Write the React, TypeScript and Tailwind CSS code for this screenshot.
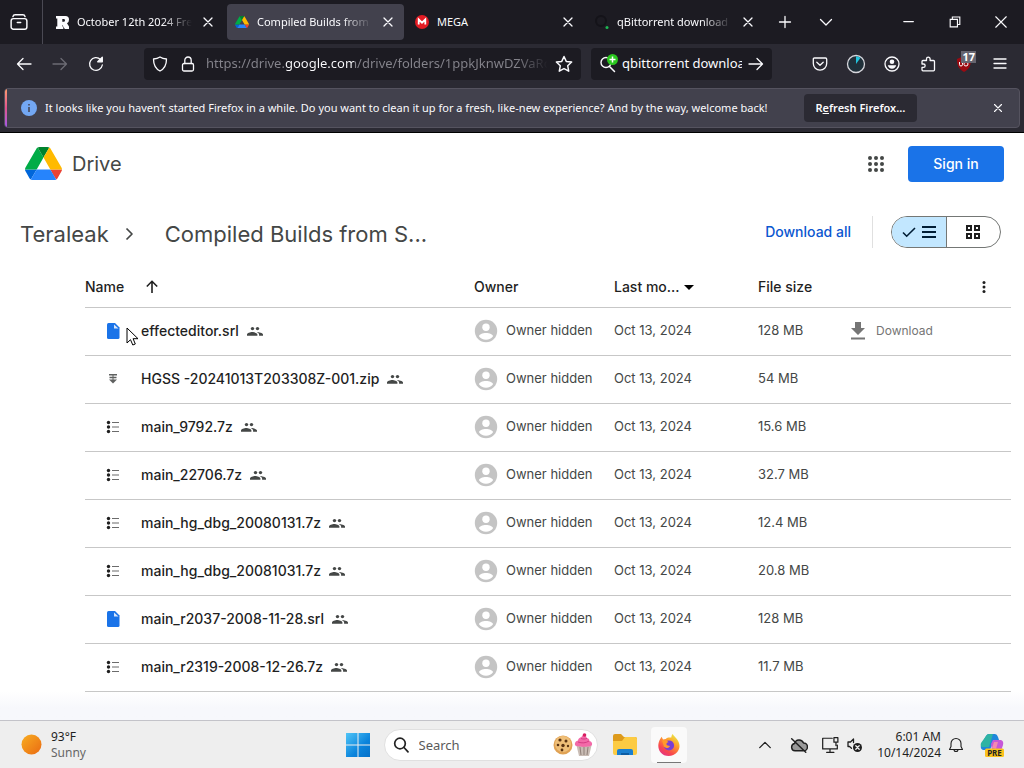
import type { ReactNode } from "react";
import clsx from "clsx";

type FileKind = "doc" | "zip" | "archive";
type DriveFile = { name: string; kind: FileKind; size: string };

const files: DriveFile[] = [
  { name: "effecteditor.srl", kind: "doc", size: "128 MB" },
  { name: "HGSS -20241013T203308Z-001.zip", kind: "zip", size: "54 MB" },
  { name: "main_9792.7z", kind: "archive", size: "15.6 MB" },
  { name: "main_22706.7z", kind: "archive", size: "32.7 MB" },
  { name: "main_hg_dbg_20080131.7z", kind: "archive", size: "12.4 MB" },
  { name: "main_hg_dbg_20081031.7z", kind: "archive", size: "20.8 MB" },
  { name: "main_r2037-2008-11-28.srl", kind: "doc", size: "128 MB" },
  { name: "main_r2319-2008-12-26.7z", kind: "archive", size: "11.7 MB" },
];

function Line({ size = 16, className, children }: { size?: number; className?: string; children: ReactNode }) {
  return (
    <svg width={size} height={size} viewBox="0 0 16 16" fill="none" stroke="currentColor" strokeWidth="1.3" strokeLinecap="round" strokeLinejoin="round" className={clsx("shrink-0", className)} aria-hidden="true">
      {children}
    </svg>
  );
}

function DriveLogo({ className }: { className?: string }) {
  return (
    <svg viewBox="0 0 87.3 78" className={className} aria-hidden="true">
      <path fill="#0066da" d="m6.6 66.85 3.85 6.65c.8 1.4 1.95 2.5 3.3 3.3l13.75-23.8h-27.5c0 1.55.4 3.1 1.2 4.5z" />
      <path fill="#00ac47" d="m43.65 25-13.75-23.8c-1.35.8-2.5 1.9-3.3 3.3l-25.4 44a9.06 9.06 0 0 0 -1.2 4.5h27.5z" />
      <path fill="#ea4335" d="m73.55 76.8c1.35-.8 2.5-1.9 3.3-3.3l1.6-2.75 7.65-13.25c.8-1.4 1.2-2.95 1.2-4.5h-27.502l5.852 11.5z" />
      <path fill="#00832d" d="m43.65 25 13.75-23.8c-1.35-.8-2.9-1.2-4.5-1.2h-18.5c-1.6 0-3.15.45-4.5 1.2z" />
      <path fill="#2684fc" d="m59.8 53h-32.3l-13.75 23.8c1.35.8 2.9 1.2 4.5 1.2h50.8c1.6 0 3.15-.45 4.5-1.2z" />
      <path fill="#ffba00" d="m73.4 26.5-12.7-22c-.8-1.4-1.95-2.5-3.3-3.3l-13.75 23.8 16.15 28h27.45c0-1.55-.4-3.1-1.2-4.5z" />
    </svg>
  );
}

const CloseIcon = ({ size = 16 }: { size?: number }) => (
  <Line size={size}><path d="M4 4l8 8M12 4l-8 8" /></Line>
);

function Tab({ title, icon, active, fade }: { title: string; icon: ReactNode; active?: boolean; fade?: boolean }) {
  return (
    <div className={clsx("flex h-9 min-w-0 max-w-[177px] flex-1 items-center gap-2 rounded px-2", active && "bg-[#42414d]")}>
      <span className="flex w-[14px] shrink-0 justify-center">{icon}</span>
      <button type="button" className={clsx("min-w-0 flex-1 overflow-hidden text-left whitespace-nowrap", fade && "[mask-image:linear-gradient(to_left,transparent,black_30px)]")}>
        {title}
      </button>
      <button type="button" aria-label="Close tab"><CloseIcon /></button>
    </div>
  );
}

function TabBar() {
  return (
    <div className="flex h-11 items-center bg-[#1c1b22]">
      <button type="button" aria-label="Recent browsing" className="flex w-[42px] justify-center pr-1">
        <Line size={18}>
          <rect x="1" y="5" width="14" height="9.4" rx="2" />
          <path d="M2.6 3.2c.3-1.2 1-1.7 2-1.7h6.8c1 0 1.7.5 2 1.7M6.500 8.500h3" />
        </Line>
      </button>
      <div className="h-full w-px bg-[#4a4953]" />
      <div className="ml-1 flex min-w-0 flex-1 items-center gap-[3px]">
        <Tab
          title="October 12th 2024 Frea"
          fade
          icon={
            <svg width="13" height="13" viewBox="0 0 13 13" aria-hidden="true">
              <path fill="#fbfbfe" fillRule="evenodd" d="M0 0h9.500Q13 0 13 3.700 13 6.300 11 7.200L13 10.500V13H8.800L6.300 8.800V10.500H7.300V13H0v-2.500h1.300v-8H0zM6.300 3v2.800h1.500q1.200 0 1.200-1.400T7.800 3z" />
            </svg>
          }
        />
        <Tab title="Compiled Builds from S" fade active icon={<DriveLogo className="w-[15px]" />} />
        <Tab
          title="MEGA"
          icon={
            <svg width="14" height="14" viewBox="0 0 14 14" aria-hidden="true">
              <circle cx="7" cy="7" r="7" fill="#e31b23" />
              <path d="M3.700 9.500v-5L7 7.700l3.300-3.200v5" fill="none" stroke="#fff" strokeWidth="1.800" />
            </svg>
          }
        />
        <Tab
          title="qBittorrent download l"
          fade
          icon={
            <svg width="14" height="14" viewBox="0 0 14 14" aria-hidden="true">
              <circle cx="6" cy="6" r="5" fill="none" stroke="#141319" strokeWidth="2" />
              <circle cx="12" cy="12.500" r="1.500" fill="#1db954" />
            </svg>
          }
        />
        <button type="button" aria-label="New tab" className="flex w-9 justify-center"><Line><path d="M8 2.500v11M2.500 8h11" /></Line></button>
        <button type="button" aria-label="List all tabs" className="ml-[2px] flex w-9 justify-center"><Line><path d="M2.500 5.500L8 11l5.500-5.500" /></Line></button>
      </div>
      <button type="button" aria-label="Minimize" className="flex w-[46px] justify-center"><Line size={14}><path d="M2 7.500h11" /></Line></button>
      <button type="button" aria-label="Restore" className="flex w-[46px] justify-center">
        <Line size={14}><path d="M2.500 5h8.300v8.500H2.500zM5 4.500V2.300h8.500v8.500H11.300" strokeLinejoin="miter" /></Line>
      </button>
      <button type="button" aria-label="Close window" className="flex w-[46px] justify-center"><Line size={14}><path d="M2 2l12 12M14 2L2 14" /></Line></button>
    </div>
  );
}

function ToolButton({ label, children, className }: { label: string; children: ReactNode; className?: string }) {
  return (
    <button type="button" aria-label={label} className={clsx("flex h-8 w-9 items-center justify-center", className)}>
      {children}
    </button>
  );
}

function Toolbar() {
  return (
    <div className="flex h-11 items-center px-[6px] pb-1">
      <ToolButton label="Back"><Line><path d="M15 8H1.500M7 2.500L1.500 8 7 13.500" /></Line></ToolButton>
      <ToolButton label="Forward" className="text-[#6c6b74]"><Line><path d="M1 8h13.500M9 2.500L14.500 8 9 13.500" /></Line></ToolButton>
      <ToolButton label="Reload">
        <Line><path d="M14.300 9A6.400 6.400 0 1 1 12.500 3.500" /><path d="M14.300 1.200v4.600H9.700z" fill="currentColor" /></Line>
      </ToolButton>
      <div className="ml-[30px] flex h-8 min-w-0 flex-1 items-center rounded bg-[#1c1b22] px-2">
        <Line><path d="M8 1c2 1.400 4 1.900 6.500 2 0 6-1.500 9.500-6.500 12C3 12.500 1.500 9 1.500 3 4 2.900 6 2.400 8 1z" /></Line>
        <Line className="ml-3"><rect x="2.500" y="7.500" width="11" height="7.500" rx="1.500" /><path d="M4.800 7.500V4.200a3.200 3.200 0 0 1 6.400 0v3.300" /></Line>
        <input
          aria-label="Address"
          defaultValue="https://drive.google.com/drive/folders/1ppkJknwDZVaRo"
          className="mr-2 ml-[10px] min-w-0 flex-1 bg-[linear-gradient(to_right,#85848c_78px,#fbfbfe_78px,#fbfbfe_148px,#85848c_148px,#85848c_310px,#1c1b22_342px)] bg-clip-text text-[13px] text-transparent outline-none"
        />
        <Line size={18}><path d="M8 1.300l2 4.400 4.800.6-3.500 3.300.9 4.800L8 12.100l-4.200 2.300.9-4.800L1.200 6.300 6 5.700z" /></Line>
      </div>
      <div className="ml-[10px] flex h-8 w-[181px] items-center rounded bg-[#1c1b22] px-2">
        <svg width="20" height="20" viewBox="0 0 20 20" fill="none" aria-hidden="true" className="shrink-0">
          <circle cx="7" cy="8.500" r="5" stroke="#fbfbfe" strokeWidth="1.400" />
          <path d="M10.500 12.500l5 5" stroke="#fbfbfe" strokeWidth="1.500" strokeLinecap="round" />
          <circle cx="13.500" cy="5.500" r="5.500" fill="#2ac71e" />
          <path d="M13.500 2.500v6M10.500 5.500h6" stroke="#fff" strokeWidth="1.500" />
        </svg>
        <input aria-label="Search" defaultValue="qbittorrent download" className="mr-[6px] ml-[3px] min-w-0 flex-1 text-[13px] outline-none" />
        <button type="button" aria-label="Go"><Line><path d="M1 8h13.500M9 2.500L14.500 8 9 13.500" /></Line></button>
      </div>
      <div className="ml-[30px] flex">
        <ToolButton label="Save to Pocket">
          <Line><path d="M2.500 2h11q1.200 0 1.200 1.200V7.500a6.700 6.700 0 0 1-13.400 0V3.200Q1.300 2 2.500 2zM4.800 6.300L8 9.300l3.200-3" /></Line>
        </ToolButton>
        <ToolButton label="Timer">
          <svg width="20" height="20" viewBox="0 0 20 20" aria-hidden="true">
            <circle cx="10" cy="10" r="8.500" fill="#20303a" stroke="#d6d6dc" strokeWidth="1.300" />
            <path d="M10 10V2.200a7.800 7.800 0 0 1 4.500 1.600z" fill="#22c3dc" />
          </svg>
        </ToolButton>
        <ToolButton label="Account">
          <Line><circle cx="8" cy="8" r="7" /><circle cx="8" cy="5.800" r="2.300" fill="currentColor" stroke="none" /><path d="M3.800 9.300h8.400A4.800 4.800 0 0 1 8 12.800a4.800 4.800 0 0 1-4.200-3.500z" fill="currentColor" stroke="none" /></Line>
        </ToolButton>
        <ToolButton label="Extensions">
          <Line><path d="M2 7V5.500q0-1 1-1h3.500V3a1.800 1.800 0 0 1 3.600 0v1.500h3.400q1 0 1 1v8.300q0 1-1 1H3q-1 0-1-1V11.300h1.500a1.600 1.600 0 0 0 0-3.300H2z" /></Line>
        </ToolButton>
        <ToolButton label="uBlock Origin" className="relative">
          <svg width="16" height="16" viewBox="0 0 16 16" aria-hidden="true">
            <path fill="#9b0a12" d="M8 0l7 3c0 6-1 9.500-7 13C2 12.500 1 9 1 3z" />
            <path d="M3.500 6v2.500q0 1.500 1.500 1.500t1.500-1.500V6M8 8.500q0 1.500 2 1.500t2-2-2-2-2 2z" fill="none" stroke="#fff" />
          </svg>
          <span className="absolute top-[3px] right-[6px] bg-[#666570] px-px text-[11px] leading-3 font-bold text-white">17</span>
        </ToolButton>
        <ToolButton label="Menu"><Line><path d="M2 3h12M2 7.500h12M2 12h12" /></Line></ToolButton>
      </div>
    </div>
  );
}

function Notification() {
  return (
    <div className="mx-1 flex h-10 items-center overflow-hidden rounded border border-[#55535f] bg-[#42414d]">
      <div className="h-full w-[2px] bg-linear-to-b from-[#ff9a6c] via-[#e2528c] to-[#a455e8]" />
      <svg width="16" height="16" viewBox="0 0 16 16" className="ml-[14px] shrink-0" aria-hidden="true">
        <circle cx="8" cy="8" r="8" fill="#73a7f3" />
        <path d="M8 7v5M8 4v1.500" stroke="#42414d" strokeWidth="1.500" />
      </svg>
      <p className="ml-2 truncate">
        It looks like you haven’t started Firefox in a while. Do you want to clean it up for a fresh, like-new experience? And by the way, welcome back!
      </p>
      <button type="button" className="ml-9 h-7 shrink-0 rounded bg-[#2b2a33] px-3 font-semibold">
        R<span className="underline">e</span>fresh Firefox…
      </button>
      <button type="button" aria-label="Dismiss" className="mr-[14px] ml-auto"><CloseIcon size={14} /></button>
    </div>
  );
}

function FileIcon({ kind }: { kind: FileKind }) {
  if (kind === "doc") {
    return (
      <svg width="16" height="16" viewBox="0 0 16 16" aria-hidden="true">
        <path fill="#1a73e8" d="M3.500 0H10l4.500 4.500V14.500Q14.500 16 13 16H3.500Q2 16 2 14.500v-13Q2 0 3.500 0z" />
        <path fill="#d6e6fc" d="M9 1.500V5.500h4.500z" />
      </svg>
    );
  }
  if (kind === "zip") {
    return (
      <svg width="16" height="16" viewBox="0 0 16 16" fill="#5f6160" aria-hidden="true">
        <path d="M4 3h8v1.500H4zM4.500 5.800h7v1.500h-7zM4 8.500h8L8 12.500zM7.500 4h1v5h-1z" />
      </svg>
    );
  }
  return (
    <svg width="16" height="16" viewBox="0 0 16 16" fill="#1f1f1f" aria-hidden="true">
      <circle cx="3.500" cy="3.500" r="1.700" />
      <circle cx="3.500" cy="8" r="1.700" />
      <circle cx="3.500" cy="12.500" r="1.700" />
      <path d="M7 3h7v1H7zM7 7.500h7v1H7zM7 12h7v1H7z" fill="#6b6b6b" />
    </svg>
  );
}

function SharedIcon() {
  return (
    <svg width="16" height="16" viewBox="0 0 16 16" fill="#444746" aria-label="Shared">
      <circle cx="5.500" cy="5.600" r="1.700" />
      <circle cx="10.500" cy="5.600" r="1.700" />
      <path d="M0 12.800v-1.200C0 9.900 3.400 8.900 5.200 8.900s5.200 1 5.200 2.700v1.200zM9.600 8.900c2.200 0 6.400 1 6.400 2.700v1.200h-3.900v-1.200c0-1.200-1-2.100-2.500-2.700z" />
    </svg>
  );
}

function Cursor() {
  return (
    <svg width="13" height="20" viewBox="0 0 13 20" className="absolute top-[6px] left-[41px]" aria-hidden="true">
      <path d="M1 1v15l3.500-3.300L6.800 18l2.500-1-2.200-5.300H12z" fill="#fff" stroke="#000" />
    </svg>
  );
}

function FileTable() {
  return (
    <table className="w-full table-fixed text-left text-[13px] text-[#444746]">
      <colgroup>
        <col />
        <col className="w-[140px]" />
        <col className="w-[144px]" />
        <col className="w-[82px]" />
        <col className="w-[171px]" />
      </colgroup>
      <thead>
        <tr className="h-[39px] border-b border-[#c7c7c7] text-sm text-[#1f1f1f]">
          <th className="font-medium">
            <button type="button" className="flex items-center gap-5">
              Name
              <Line className="text-[#1f1f1f]"><path d="M8 14V2.500M2.800 7.500L8 2.300l5.200 5.200" strokeWidth="1.600" strokeLinecap="butt" strokeLinejoin="miter" /></Line>
            </button>
          </th>
          <th className="font-medium">Owner</th>
          <th className="font-medium">
            <button type="button" className="flex items-center gap-1">
              Last mo...
              <svg width="10" height="5" viewBox="0 0 10 5" aria-hidden="true"><path d="M0 0h10L5 5z" /></svg>
            </button>
          </th>
          <th className="font-medium">File size</th>
          <th className="pr-5">
            <button type="button" aria-label="More options" className="ml-auto flex">
              <svg width="14" height="14" viewBox="0 0 14 14" fill="#1f1f1f" aria-hidden="true">
                <circle cx="7" cy="2.500" r="1.500" /><circle cx="7" cy="7" r="1.500" /><circle cx="7" cy="11.500" r="1.500" />
              </svg>
            </button>
          </th>
        </tr>
      </thead>
      <tbody>
        {files.map((file, i) => (
          <tr key={file.name} className="h-12 border-b border-[#c7c7c7]">
            <td>
              <div className="relative flex items-center pl-5">
                <FileIcon kind={file.kind} />
                <span className="mr-2 ml-5 text-sm font-medium whitespace-nowrap text-[#1f1f1f]">{file.name}</span>
                <SharedIcon />
                {i === 0 && <Cursor />}
              </div>
            </td>
            <td>
              <div className="flex items-center gap-2 whitespace-nowrap">
                <svg width="24" height="24" viewBox="0 0 24 24" aria-hidden="true">
                  <circle cx="12" cy="12" r="11.200" fill="#c4c4c4" />
                  <circle cx="12" cy="8.200" r="3.700" fill="#fff" />
                  <path d="M12 14c3.500 0 7 1.400 7 3.300-1.500 2-4 3.500-7 3.500s-5.500-1.500-7-3.500C5 15.400 8.500 14 12 14z" fill="#fff" />
                </svg>
                Owner hidden
              </div>
            </td>
            <td>Oct 13, 2024</td>
            <td>{file.size}</td>
            <td>
              {i === 0 && (
                <button type="button" className="ml-[10px] flex items-center gap-[10px] text-xs text-[#757575]">
                  <svg width="16" height="18" viewBox="0 0 16 18" fill="currentColor" aria-hidden="true">
                    <path d="M5 0h6v6h4l-7 7-7-7h4zM1 15.500h14v2H1z" />
                  </svg>
                  Download
                </button>
              )}
            </td>
          </tr>
        ))}
      </tbody>
    </table>
  );
}

function DrivePage() {
  return (
    <main className="flex-1 bg-linear-to-b from-white from-95% to-[#f7f8fc] to-98% font-['Inter','Noto_Sans',sans-serif]">
      <header className="flex items-center pt-[13px] pr-5 pl-[25px]">
        <a href="#drive" className="flex items-center gap-[10px] text-xl text-[#444746]">
          <DriveLogo className="w-[37px]" />
          Drive
        </a>
        <button type="button" aria-label="Google apps" className="mr-6 ml-auto">
          <svg width="16" height="16" viewBox="0 0 16 16" fill="#444746" aria-hidden="true">
            {[2, 8, 14].map((y) => [2, 8, 14].map((x) => <circle key={`${x}-${y}`} cx={x} cy={y} r="2" />))}
          </svg>
        </button>
        <a href="#signin" className="flex h-9 w-24 items-center justify-center rounded bg-[#1a73e8] text-sm font-medium text-white">Sign in</a>
      </header>

      <div className="mt-[34px] flex h-8 items-center pr-[23px] pl-5">
        <nav className="flex items-center pt-1 text-[22px] text-[#444746]">
          <a href="#teraleak">Teraleak</a>
          <Line className="mx-3"><path d="M5.500 2.500L11 8l-5.500 5.500" strokeWidth="1.700" strokeLinecap="butt" /></Line>
          <h1 className="ml-4 whitespace-nowrap">Compiled Builds from S...</h1>
        </nav>
        <a href="#download" className="ml-auto text-sm font-medium text-[#0b57d0]">Download all</a>
        <div className="mr-[18px] ml-[21px] h-8 w-px bg-[#e0e0e0]" />
        <div className="flex h-8 w-[110px] overflow-hidden rounded-full border border-[#747775]">
          <button type="button" aria-label="List layout" aria-pressed="true" className="flex flex-1 items-center justify-center gap-1 border-r border-[#747775] bg-[#c2e7ff] text-[#001d35]">
            <Line><path d="M2 8.500l3.700 3.700L14 4" strokeWidth="1.600" strokeLinecap="butt" strokeLinejoin="miter" /></Line>
            <Line><path d="M1 3h14M1 8h14M1 13h14" strokeWidth="2" strokeLinecap="butt" /></Line>
          </button>
          <button type="button" aria-label="Grid layout" aria-pressed="false" className="flex flex-1 items-center justify-center text-[#1f1f1f]">
            <Line><path d="M2 2h4v4H2zM10 2h4v4h-4zM2 10h4v4H2zM10 10h4v4h-4z" strokeWidth="2" strokeLinejoin="miter" /></Line>
          </button>
        </div>
      </div>

      <div className="mt-5 mb-7 pr-[13px] pl-[85px]">
        <FileTable />
      </div>
    </main>
  );
}

function Taskbar() {
  return (
    <footer className="flex h-12 items-center border-t border-[#c3c3c9] bg-[#eeeeee] text-xs leading-4 text-[#1f1f1f]">
      <div className="flex flex-1 items-center gap-[9px] pl-[21px]">
        <svg width="21" height="21" viewBox="0 0 21 21" aria-hidden="true">
          <defs>
            <linearGradient id="sun" x1="0" y1="0" x2="1" y2="1"><stop stopColor="#f8ae22" /><stop offset="1" stopColor="#ea6a12" /></linearGradient>
          </defs>
          <circle cx="10.500" cy="10.500" r="10" fill="url(#sun)" />
        </svg>
        <div>
          <div>93°F</div>
          <div className="text-[#666]">Sunny</div>
        </div>
      </div>

      <div className="flex items-center pl-[7px]">
        <button type="button" aria-label="Start">
          <svg width="24" height="24" viewBox="0 0 24 24" aria-hidden="true">
            <defs>
              <linearGradient id="win" x1="0" y1="0" x2="24" y2="24" gradientUnits="userSpaceOnUse"><stop stopColor="#50c5f7" /><stop offset=".6" stopColor="#0b84dc" /><stop offset="1" stopColor="#0670c8" /></linearGradient>
            </defs>
            <path fill="url(#win)" d="M0 0h11.500v11.500H0zM12.500 0H24v11.500H12.500zM0 12.500h11.500V24H0zM12.500 12.500H24V24H12.500z" />
          </svg>
        </button>
        <label className="ml-[14px] flex h-8 w-[214px] items-center rounded-full border border-[#e0e0e0] bg-white pr-1 pl-2">
          <Line className="text-[#222]"><circle cx="7" cy="6.500" r="5.300" strokeWidth="1.700" /><path d="M11 10.500l4 4.300" strokeWidth="1.700" /></Line>
          <input aria-label="Search" placeholder="Search" className="ml-[10px] min-w-0 flex-1 text-[13px] outline-none placeholder:text-[#5a5a5a]" />
          <svg width="40" height="24" viewBox="0 0 40 24" aria-hidden="true">
            <circle cx="10" cy="12" r="9.500" fill="#e0a254" />
            <circle cx="10" cy="11" r="8" fill="#efbf78" />
            <g fill="#5b3413"><circle cx="7" cy="7" r="1.600" /><circle cx="13" cy="8" r="1.500" /><circle cx="5" cy="12" r="1.300" /><circle cx="10" cy="12.500" r="1.700" /><circle cx="15" cy="13" r="1.200" /><circle cx="9" cy="17" r="1.400" /></g>
            <path d="M23.500 12.500h15L36 23H26z" fill="#c9bcb4" />
            <path d="M27 14l1 8M31 14v8M35 14l-1 8" stroke="#8f8078" />
            <path d="M22 12c-.5-3 1.500-4 3-4.500 0-2 2-3 3.500-3.500.5-2 3-3 4.500-1 .5 1 .3 1.500 1 2 2 .5 2.500 2 2.500 3 2 .5 3 2 2.500 4-1 2.500-16 2.500-17 0z" fill="#f36aa8" />
            <path d="M25 9c4 1.500 8 1 11-1M28 5.500c2 .8 4 .6 6-.2" stroke="#d63d84" fill="none" />
            <circle cx="31.500" cy="2" r="1.800" fill="#d81b60" />
          </svg>
        </label>
        <button type="button" aria-label="File Explorer" className="ml-[9px] flex size-9 items-center justify-center">
          <svg width="26" height="24" viewBox="0 0 26 24" aria-hidden="true">
            <path d="M1 3q0-2 2-2h6l3 3h11q2 0 2 2v5H1z" fill="#dd9a1b" />
            <path d="M1 8h9l3-4h10q2 0 2 2v14q0 2-2 2H3q-2 0-2-2z" fill="#fccb43" />
            <path d="M5 22v-4q0-2 2-2h12q2 0 2 2v4z" fill="#1a7fd0" />
            <path d="M9 22v-2h8v2z" fill="#0c5ca3" />
          </svg>
        </button>
        <button type="button" aria-label="Firefox" className="ml-2 flex size-9 flex-col items-center justify-between rounded bg-[#fafafa] pt-[6px]">
          <svg width="24" height="24" viewBox="0 0 26 26" aria-hidden="true">
            <defs>
              <linearGradient id="fox" x1="20" y1="1" x2="5" y2="24" gradientUnits="userSpaceOnUse"><stop stopColor="#e6f04a" /><stop offset=".35" stopColor="#ffa32b" /><stop offset=".75" stopColor="#f8464e" /><stop offset="1" stopColor="#e0318a" /></linearGradient>
            </defs>
            <path fill="url(#fox)" d="M17 1c1 2 2.500 3 4.500 5.500C25 11 25.500 16 22 20.500 17 26.500 8 26 4 21 .5 17 .8 11 3.500 6.500L5 4l1.500 3 3-.5C11 4.500 14 5 15.500 5c0-1.500.5-3 1.500-4z" />
            <circle cx="13" cy="13.500" r="5.500" fill="#7a3fd4" />
            <path fill="#ff9a2a" d="M5.500 8c3-1 5 0 7 2-2 .3-2.500 1.500-2.200 2.500.5 1.500 2.200 1.200 3.700 1.500-1 2.500-4.500 3-6.500 1z" />
          </svg>
          <span className="h-px w-6 bg-[#777]" />
        </button>
      </div>

      <div className="flex flex-1 items-center justify-end pr-5 text-right">
        <Line size={14} className="mr-[18px]"><path d="M2 11l6-6 6 6" strokeWidth="1.500" /></Line>
        <Line size={18} className="mr-[13px]"><path d="M4.500 13.200a3.300 3.300 0 0 1-.5-6.500 4.200 4.200 0 0 1 8-.5 3.500 3.500 0 0 1 0 7zM1.500 2.500l12.500 12" fill="#999" /></Line>
        <Line size={18} className="mr-2"><path d="M10 2H1.500v9.500h13V8M5 14.500h6.500M8 11.500v3M11.500 1.500h3.500v4h-3.500zM13.300 5.500v3" strokeWidth="1.100" /></Line>
        <Line><path d="M6.500 5.500V2L3.500 5H1v4.500h1.500l2 1.800" /><circle cx="10.500" cy="10.500" r="4.500" fill="currentColor" stroke="none" /><path d="M8.800 8.800l3.400 3.400M12.200 8.800l-3.400 3.400" stroke="#eee" /></Line>
        <div className="ml-[14px]">
          <div>6:01 AM</div>
          <div>10/14/2024</div>
        </div>
        <Line className="ml-[7px]"><path d="M1.500 12.500h13L13 9.500V6.500a5 5 0 0 0-10 0v3zM6 12.500a2 2 0 0 0 4 0" strokeWidth="1.100" /></Line>
        <svg width="24" height="24" viewBox="0 0 24 24" className="ml-4" aria-label="Copilot preview">
          <path d="M6 3q1-2 3-2h6q2 0 3 3l1 3h-5L10 17H3q-3-1-2-5z" fill="#1f87dc" />
          <path d="M6 3q1-2 3-2h4L9 14H2q-2-1-1-4z" fill="#2eb3a3" />
          <path d="M11 11l2-4h8q3 1 2 5l-2 6h-9z" fill="#c658d8" />
          <path d="M12 15l2-6h4l-2 7z" fill="#f38ab0" />
          <rect x="5" y="15.500" width="19" height="8.500" rx="1.500" fill="#fbc21c" />
          <text x="14.500" y="22.500" textAnchor="middle" fontSize="8" fontWeight="bold" fill="#222">PRE</text>
        </svg>
      </div>
    </footer>
  );
}

export default function App() {
  return (
    <div className="flex min-h-screen flex-col bg-white font-['Noto_Sans','Open_Sans',sans-serif]">
      <div className="border-b border-black bg-[#2b2a33] pb-1 text-[11px] text-[#fbfbfe]">
        <TabBar />
        <Toolbar />
        <Notification />
      </div>
      <DrivePage />
      <Taskbar />
    </div>
  );
}
